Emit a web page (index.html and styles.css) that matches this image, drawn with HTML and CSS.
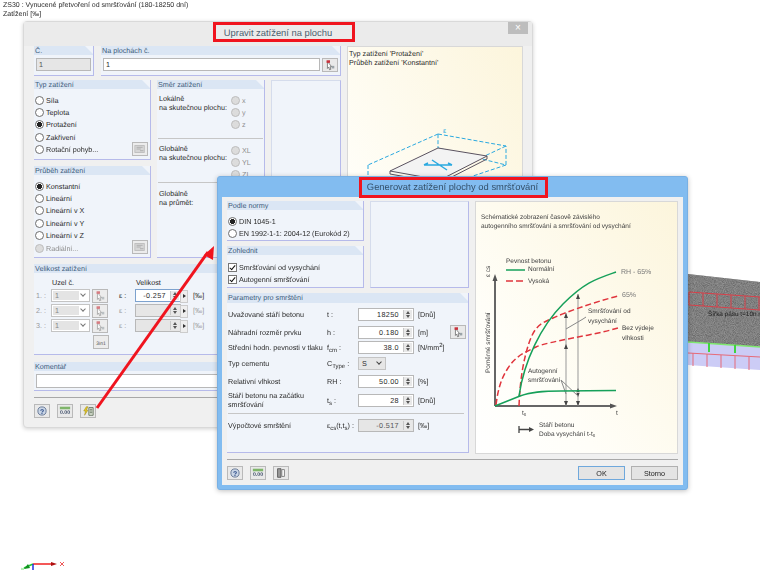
FILE: index.html

```html
<!DOCTYPE html>
<html lang="cs">
<head>
  <meta charset="UTF-8" />
  <title>Generovat zatížení plochy od smršťování</title>
  <link rel="stylesheet" href="styles.css">
</head>
<body>

<svg class="defs" width="0" height="0">
  <symbol id="pick" viewBox="0 0 16 14">
    <path d="M5 3l5 6-2 0 1 3-1.500 .5-1-3-1.500 1.500z" fill="#fff" stroke="#555" stroke-width=".8"/>
    <rect x="4" y="1.500" width="4" height="3" fill="#c8323c"/>
    <rect x="10" y="8" width="3" height="3" fill="#9aa3a8"/>
  </symbol>
  <symbol id="card" viewBox="0 0 16 14">
    <rect x="2" y="3" width="11" height="8" fill="#c9c9c9" stroke="#9a9a9a"/>
    <path d="M4 5h7M4 7h5M8 9h4" stroke="#7c7c7c"/>
  </symbol>
</svg>

<div class="stage">

  <header class="doc-head">
    <div>ZS30 : Vynucené přetvoření od smršťování (180-18250 dní)</div>
    <div>Zatížení [‰]</div>
  </header>

  <!-- 3D model behind the dialogs -->
  <svg class="model" viewBox="688 270 72 104">
    <defs>
      <filter id="grain" x="0" y="0" width="100%" height="100%">
        <feTurbulence type="fractalNoise" baseFrequency="1.100" numOctaves="2" seed="4"/>
        <feColorMatrix values="0 0 0 0 .3  0 0 0 0 .3  0 0 0 0 .3  .9 .9 .9 0 -.9"/>
        <feComposite in2="SourceGraphic" operator="in"/>
        <feMerge><feMergeNode in="SourceGraphic"/><feMergeNode/></feMerge>
      </filter>
    </defs>
    <path d="M688 274L760 282V347L688 342z" fill="#6c6c6c" filter="url(#grain)"/>
    <path d="M688 342L760 347V370L688 365z" fill="#ccccf6"/>
    <path d="M688 342L760 347" stroke="#7fe86f" stroke-width="1.500"/>
    <path d="M689 292L760 297M689 305L760 310M689 292V305M703 293V306M717 294V307M731 295V308M745 296V309M759 297V310" stroke="#d8404a" fill="none"/>
    <path d="M688 353L760 357M693 353V366M707 354V367M721 355V368M735 356V369M749 357V370" stroke="#e66a78" fill="none"/>
    <path d="M709 343V352M735 345V353" stroke="#3fd43f" stroke-width="2"/>
    <text x="708" y="316" font-size="6.400" fill="#1c1c1c" font-family="Liberation Sans">Šířka pásu t=10n n</text>
  </svg>

  <section class="win win-back">
    <div class="win-title">Upravit zatížení na plochu</div>
    <button class="win-close">×</button>
    <div class="win-body">
      <div class="back-main">
        <div class="back-left">
          <div class="back-row1">
            <div class="group">
              <h4>Č.</h4>
              <div class="pad-field"><div class="field field-off">1</div></div>
            </div>
            <div class="group">
              <h4>Na plochách č.</h4>
              <div class="pad-field pad-pick">
                <div class="field field-grow">1</div>
                <span class="tool"><svg><use href="#pick"/></svg></span>
              </div>
            </div>
          </div>

          <div class="back-row2">
            <div class="col-stack">
              <div class="group group-typ">
                <h4>Typ zatížení</h4>
                <div class="radios">
                  <label class="opt"><input type="radio" name="typ"> Síla</label>
                  <label class="opt"><input type="radio" name="typ"> Teplota</label>
                  <label class="opt"><input type="radio" name="typ" checked> Protažení</label>
                  <label class="opt"><input type="radio" name="typ"> Zakřivení</label>
                  <label class="opt opt-tool"><input type="radio" name="typ"> Rotační pohyb...<span class="tool tool-dim"><svg><use href="#card"/></svg></span></label>
                </div>
              </div>
              <div class="group group-prubeh">
                <h4>Průběh zatížení</h4>
                <div class="radios">
                  <label class="opt"><input type="radio" name="pr" checked> Konstantní</label>
                  <label class="opt"><input type="radio" name="pr"> Lineární</label>
                  <label class="opt"><input type="radio" name="pr"> Lineární v X</label>
                  <label class="opt"><input type="radio" name="pr"> Lineární v Y</label>
                  <label class="opt"><input type="radio" name="pr"> Lineární v Z</label>
                  <label class="opt opt-tool opt-off"><input type="radio" name="pr" disabled> Radiální...<span class="tool tool-dim"><svg><use href="#card"/></svg></span></label>
                </div>
              </div>
            </div>

            <div class="group group-smer">
              <h4>Směr zatížení</h4>
              <div class="dir-block">
                <div>Lokálně<br>na skutečnou plochu:</div>
                <div class="dir-opts">
                  <label class="opt opt-off"><input type="radio" disabled> x</label>
                  <label class="opt opt-off"><input type="radio" disabled> y</label>
                  <label class="opt opt-off"><input type="radio" disabled> z</label>
                </div>
              </div>
              <div class="dir-block">
                <div>Globálně<br>na skutečnou plochu:</div>
                <div class="dir-opts">
                  <label class="opt opt-off"><input type="radio" disabled> XL</label>
                  <label class="opt opt-off"><input type="radio" disabled> YL</label>
                  <label class="opt opt-off"><input type="radio" disabled> ZL</label>
                </div>
              </div>
              <div class="dir-block dir-last">
                <div>Globálně<br>na průmět:</div>
              </div>
            </div>

            <div class="group group-empty"></div>
          </div>

          <div class="group group-vel">
            <h4>Velikost zatížení</h4>
            <div class="vel-head"><span>Uzel č.</span><span>Velikost</span></div>
            <div class="vel-row">
              <span class="vel-no">1. :</span>
              <span class="combo"><span>1</span></span>
              <span class="tool tool-dim"><svg><use href="#pick"/></svg></span>
              <span class="vel-sym">ε :</span>
              <div class="field field-num field-focus">-0.257<span class="spin"></span><span class="spin-arrow"></span></div>
              <span class="unit">[‰]</span>
            </div>
            <div class="vel-row">
              <span class="vel-no">2. :</span>
              <span class="combo"><span>1</span></span>
              <span class="tool tool-dim"><svg><use href="#pick"/></svg></span>
              <span class="vel-sym vel-dim">ε :</span>
              <div class="field field-num field-off">&nbsp;<span class="spin"></span><span class="spin-arrow"></span></div>
              <span class="unit vel-dim">[‰]</span>
            </div>
            <div class="vel-row">
              <span class="vel-no">3. :</span>
              <span class="combo"><span>1</span></span>
              <span class="tool tool-dim"><svg><use href="#pick"/></svg></span>
              <span class="vel-sym vel-dim">ε :</span>
              <div class="field field-num field-off">&nbsp;<span class="spin"></span><span class="spin-arrow"></span></div>
              <span class="unit vel-dim">[‰]</span>
            </div>
            <div class="vel-3in1"><span class="tool tool-dim tool-text">3in1</span></div>
          </div>

          <div class="group group-kom">
            <h4>Komentář</h4>
            <div class="pad-field"><div class="field field-kom">&nbsp;</div></div>
          </div>
        </div>

        <div class="preview preview-back">
          <div>Typ zatížení 'Protažení'<br>Průběh zatížení 'Konstantní'</div>
          <svg class="preview-art" viewBox="348 47 175 130">
            <text x="443" y="133" font-size="7" fill="#2aa9e0" font-family="Liberation Sans">ε</text>
            <path d="M438 134L506 146V165L438 148zM438 134L368 165M368 165L368 185M506 165L470 177M506 146L440 177" fill="none" stroke="#2aa9e0" stroke-dasharray="4 2"/>
            <path d="M390 171L438 148L487 156L440 180z" fill="#f3f3f3" stroke="#5a5260"/>
            <path d="M390 171V174L440 183L487 159V156" fill="none" stroke="#5a5260"/>
            <path d="M424 165H452M432 160L447 170M424 165l4-2M452 165l-4-2" stroke="#2aa9e0" fill="none" stroke-width="1.500"/>
          </svg>
        </div>
      </div>

      <div class="win-foot back-foot">
        <span class="tool">
          <svg viewBox="0 0 16 14"><circle cx="8" cy="7" r="4.800" fill="#c9d5e6" stroke="#5c6f8f"/><text x="8" y="10" text-anchor="middle" font-size="8" font-weight="700" fill="#2a4a86" font-family="Liberation Sans">?</text></svg>
        </span>
        <span class="tool">
          <svg viewBox="0 0 16 14"><rect x="2" y="2" width="12" height="3" fill="#7fb56a"/><text x="8" y="11" text-anchor="middle" font-size="6" font-weight="700" fill="#3a4a66" font-family="Liberation Sans">0.00</text></svg>
        </span>
        <span class="tool"><svg viewBox="0 0 16 14"><path d="M6 2L3 7h2L4 12l4-6H6l2-4z" fill="#e8c820" stroke="#8a7a10" stroke-width=".5"/><path d="M9 3h5v9H9z" fill="#dfe7d8" stroke="#5f6f5a"/><path d="M10 5h3M10 7h3M10 9h3" stroke="#5f6f5a"/></svg></span>
      </div>
    </div>
    <div class="title-mark mark-back"></div>
  </section>

  <section class="win win-front">
    <div class="win-title">Generovat zatížení plochy od smršťování</div>
    <div class="win-body">
      <div class="front-main">
        <div class="front-left">
          <div class="front-top">
            <div class="col-stack">
              <div class="group group-norma">
                <h4>Podle normy</h4>
                <div class="radios radios-tight">
                  <label class="opt"><input type="radio" name="nor" checked> DIN 1045-1</label>
                  <label class="opt"><input type="radio" name="nor"> EN 1992-1-1: 2004-12 (Eurokód 2)</label>
                </div>
              </div>
              <div class="group group-zohl">
                <h4>Zohlednit</h4>
                <div class="radios radios-checks">
                  <label class="opt"><input type="checkbox" checked> Smršťování od vysychání</label>
                  <label class="opt"><input type="checkbox" checked> Autogenní smršťování</label>
                </div>
              </div>
            </div>
            <div class="group group-empty"></div>
          </div>

          <div class="group group-par">
            <h4>Parametry pro smrštění</h4>
            <div class="par-grid">
              <div class="par-row"><span>Uvažované stáří betonu</span><span>t :</span>
                <div class="field field-num">18250<span class="spin"></span></div><span class="unit">[Dnů]</span></div>
              <div class="par-row"><span>Náhradní rozměr prvku</span><span>h :</span>
                <div class="field field-num">0.180<span class="spin"></span></div><span class="unit">[m]</span>
                <span class="tool par-pick"><svg><use href="#pick"/></svg></span></div>
              <div class="par-row"><span>Střední hodn. pevnosti v tlaku</span><span>f<sub>cm</sub> :</span>
                <div class="field field-num">38.0<span class="spin"></span></div><span class="unit">[N/mm<sup>2</sup>]</span></div>
              <div class="par-row"><span>Typ cementu</span><span>C<sub>Type</sub> :</span>
                <div class="select">S</div></div>
              <div class="par-row"><span>Relativní vlhkost</span><span>RH :</span>
                <div class="field field-num">50.00<span class="spin"></span></div><span class="unit">[%]</span></div>
              <div class="par-row"><span>Stáří betonu na začátku<br>smršťování</span><span>t<sub>s</sub> :</span>
                <div class="field field-num">28<span class="spin"></span></div><span class="unit">[Dnů]</span></div>
              <div class="par-sep"></div>
              <div class="par-row"><span>Výpočtové smrštění</span><span>ε<sub>cs</sub>(t,t<sub>s</sub>) :</span>
                <div class="field field-num field-off">-0.517<span class="spin"></span></div><span class="unit">[‰]</span></div>
            </div>
          </div>
        </div>

        <div class="preview preview-front">
          <svg class="chart" viewBox="475 201 203 253">
            <g font-family="Liberation Sans" font-size="6.500" fill="#3c3c3c">
              <text x="480" y="218">Schématické zobrazení časově závislého</text>
              <text x="480" y="227">autogenního smršťování a smršťování od vysychání</text>
              <text x="505" y="262">Pevnost betonu</text>
              <text x="527" y="270">Normální</text>
              <text x="527" y="282">Vysoká</text>
              <text x="620" y="273" font-size="7" fill="#777">RH - 65%</text>
              <text x="621" y="296" font-size="7" fill="#777">65%</text>
              <text x="587" y="312">Smršťování od</text>
              <text x="587" y="322">vysychání</text>
              <text x="621" y="329">Bez výdeje</text>
              <text x="621" y="339">vlhkosti</text>
              <text x="527" y="372">Autogenní</text>
              <text x="527" y="381">smršťování</text>
              <text x="521" y="414">t<tspan font-size="5" dy="1">s</tspan></text>
              <text x="615" y="414">t</text>
              <text x="538" y="426">Stáří betonu</text>
              <text x="538" y="435">Doba vysychání t-t<tspan font-size="5" dy="1">s</tspan></text>
              <text transform="translate(489 276) rotate(-90)">ε cs</text>
              <text transform="translate(489 372) rotate(-90)">Poměrné smršťování</text>
            </g>
            <path d="M505 269H524" stroke="#16a05a" stroke-width="1.500"/>
            <path d="M505 280H523" stroke="#e0343c" stroke-width="1.500" stroke-dasharray="7 3"/>
            <path d="M494 405V279M494 405H612" stroke="#666" stroke-width="2" fill="none"/>
            <path d="M494 273l-2.500 7h5zM616 405l-7-2.500v5z" fill="#555"/>
            <path d="M565 312V405M577 293V405" stroke="#999" fill="none"/>
            <path d="M565 312l-2 5h4zM565 405l-2-5h4zM577 293l-2 5h4zM577 405l-2-5h4zM565 343l-2 5h4zM577 387l-2 5h4zM577 396l-2-5h4z" fill="#444"/>
            <path d="M565 328L582 318M582 318L585 316M560 379L565 393M560 379L577 395" stroke="#888" fill="none"/>
            <path d="M518 405C519 380 522 360 528 342S541 322 552 317S590 302 617 295" stroke="#e0343c" stroke-width="1.500" fill="none" stroke-dasharray="6 3"/>
            <path d="M495 404C497 388 500 378 507 367S522 352 535 346S590 335 617 327" stroke="#e0343c" stroke-width="1.500" fill="none" stroke-dasharray="6 3"/>
            <path d="M518 395C523 360 540 325 562 303S595 278 615 271" stroke="#16a05a" stroke-width="1.500" fill="none"/>
            <path d="M494 405L519 395C530 391 540 390 560 390L615 389.500" stroke="#16a05a" stroke-width="1.500" fill="none"/>
            <path d="M518 425V432M518 428.500H530" stroke="#444" stroke-width="1.300" fill="none"/>
            <path d="M533 428.500l-5-2.500v5z" fill="#444"/>
          </svg>
        </div>
      </div>

      <div class="win-foot front-foot">
        <div class="foot-tools">
          <span class="tool">
            <svg viewBox="0 0 16 14"><circle cx="8" cy="7" r="4.800" fill="#c9d5e6" stroke="#5c6f8f"/><text x="8" y="10" text-anchor="middle" font-size="8" font-weight="700" fill="#2a4a86" font-family="Liberation Sans">?</text></svg>
          </span>
          <span class="tool">
            <svg viewBox="0 0 16 14"><rect x="2" y="2" width="12" height="3" fill="#7fb56a"/><text x="8" y="11" text-anchor="middle" font-size="6" font-weight="700" fill="#3a4a66" font-family="Liberation Sans">0.00</text></svg>
          </span>
          <span class="tool"><svg viewBox="0 0 16 14"><path d="M4 2h4v10H4z" fill="#9a9a9a" stroke="#555"/><path d="M9 3h3v8H9z" fill="#fff" stroke="#777"/></svg></span>
        </div>
        <div class="foot-btns">
          <button class="btn btn-main">OK</button>
          <button class="btn">Storno</button>
        </div>
      </div>
    </div>
    <div class="title-mark mark-front"></div>
  </section>

  <svg class="arrow" viewBox="0 0 760 570">
    <path d="M97 408L208 252" stroke="#f0141e" stroke-width="3"/>
    <path d="M204 255L214 246L213 260z" fill="#f0141e"/>
  </svg>

  <svg class="axes" viewBox="0 0 70 10">
    <path d="M33 4H52" stroke="#f02020" stroke-width="1.500"/>
    <path d="M51 2l6 2-6 2z" fill="#b01010"/>
    <path d="M33 4L24 8" stroke="#22cc33" stroke-width="1.500"/>
    <path d="M28 4l-4 5 6-1z" fill="#109020"/>
    <path d="M33 4V10" stroke="#2030e0" stroke-width="1.500"/>
    <path d="M60 2l4 4M64 2l-4 4" stroke="#ee5a5a"/>
    <path d="M21 8l3 2M24 8l-3 2" stroke="#8ee88e" stroke-width=".8"/>
  </svg>
</div>

</body>
</html>
```

FILE: styles.css

```css
html, body {
  margin: 0;
  padding: 0;
  background: #fff;
}

body {
  font-family: "Liberation Sans", Arial, sans-serif;
  font-size: 7.200px;
  line-height: 9px;
  color: #2b2b2b;
  text-rendering: geometricPrecision;
}

.defs {
  position: absolute;
}

/* the reference is a scaled-down screenshot, so everything sits a little soft */
.stage {
  position: relative;
  width: 760px;
  height: 570px;
  overflow: hidden;
  filter: blur(.3px);
}

.doc-head {
  padding: 1px 3px;
  font-size: 7px;
}

/* windows lie on a free canvas */
.win {
  position: absolute;
  box-sizing: border-box;
  background: #f0f0f0;
}

.win-back {
  left: 23px;
  top: 21px;
  width: 510px;
  height: 407px;
  border: 1px solid #d9d9d9;
  border-radius: 4px;
  box-shadow: 0 1px 4px rgba(0, 0, 0, .18);
}

.win-front {
  left: 217px;
  top: 176px;
  width: 471px;
  height: 314px;
  background: #82bcf0;
  border: 1px solid #78b0e4;
  border-radius: 3px;
  box-shadow: 0 1px 5px rgba(0, 0, 0, .25);
  display: flex;
  flex-direction: column;
  padding: 0 4px 4px;
}

.win-title {
  text-align: center;
  font-size: 9.400px;
  line-height: 20px;
  color: #4c5f70;
}

.win-back .win-title {
  height: 24px;
  line-height: 22px;
  background: #ebebeb;
}

.win-front .win-title {
  height: 20px;
  color: #34506a;
}

.win-close {
  position: absolute;
  right: 4px;
  top: 0;
  width: 20px;
  height: 12px;
  padding: 0;
  border: 0;
  background: #bdbdbd;
  color: #fff;
  font-size: 10px;
  line-height: 12px;
}

.title-mark {
  position: absolute;
  box-sizing: border-box;
  border: 3px solid #f0141e;
}

.mark-back {
  left: 189px;
  top: 0;
  width: 142px;
  height: 20px;
}

.mark-front {
  left: 141px;
  top: 0;
  width: 189px;
  height: 21px;
}

.win-front .win-body {
  flex: 1;
  background: #f0f0f0;
  padding: 4px 5px 0;
}

.win-back .win-body {
  padding: 0 9px 0 10px;
}

.back-main {
  display: flex;
  gap: 6px;
  height: 345px;
}

.back-left {
  width: 307px;
  display: flex;
  flex-direction: column;
}

.back-row1 {
  display: grid;
  grid-template-columns: 60px 240px;
  gap: 7px;
  height: 28px;
  margin-bottom: 6px;
}

.back-row2 {
  display: grid;
  grid-template-columns: 117px 108px 70px;
  gap: 6px;
  height: 178px;
  margin-bottom: 6px;
}

.col-stack {
  display: flex;
  flex-direction: column;
  gap: 6px;
}

/* group panel with the cut corner heading */
.group {
  box-sizing: border-box;
  background: #f0f4fa;
  border-right: 1px solid #b6baea;
  border-bottom: 1px solid #b6baea;
}

.group h4 {
  margin: 0;
  padding-left: 1px;
  height: 9px;
  font-weight: 400;
  font-size: 7.200px;
  line-height: 9px;
  color: #3d5c7c;
  background: #dbe6f4;
  clip-path: polygon(0 0, calc(100% - 8px) 0, 100% 8px, 100% 100%, 0 100%);
}

.group-typ { height: 80px; }
.group-prubeh { height: 92px; }
.group-vel { height: 91px; margin-bottom: 7px; }
.group-kom { height: 29px; }

.group-empty {
  border: 1px solid #d5dcec;
  border-right-color: #b6baea;
  border-bottom-color: #b6baea;
}

.pad-field {
  padding: 3px 2px;
}

.pad-pick {
  display: flex;
  gap: 2px;
  padding-right: 2px;
}

.field {
  position: relative;
  box-sizing: border-box;
  height: 13px;
  line-height: 11px;
  padding: 0 2px;
  background: #fff;
  border: 1px solid #b8b8b8;
}

.field-grow { flex: 1; }
.field-off { background: #e6e6e6; color: #555; }
.field-focus { border-color: #7da2ce; }
.field-kom { height: 14px; margin: 0 -2px 0 0; }

.field-num {
  width: 56px;
  text-align: right;
  padding-right: 14px;
  letter-spacing: .4px;
}

.spin {
  position: absolute;
  right: 1px;
  top: 1px;
  bottom: 1px;
  width: 8px;
  background: #e8e8e8;
  border-left: 1px solid #c8c8c8;
}

.spin::before,
.spin::after {
  content: "";
  position: absolute;
  left: 2px;
  border-left: 2px solid transparent;
  border-right: 2px solid transparent;
}

.spin::before { top: 1px; border-bottom: 3px solid #555; }
.spin::after { bottom: 1px; border-top: 3px solid #555; }

.spin-arrow {
  position: absolute;
  right: -8px;
  top: 0;
  width: 6px;
  height: 11px;
  background: #eee;
  border: 1px solid #ccc;
}

.spin-arrow::after {
  content: "";
  position: absolute;
  left: 2px;
  top: 3px;
  border-left: 3px solid #333;
  border-top: 2px solid transparent;
  border-bottom: 2px solid transparent;
}

.tool {
  display: inline-block;
  flex: none;
  box-sizing: border-box;
  width: 16px;
  height: 14px;
  background: #e9e9e9;
  border: 1px solid #b9b9b9;
}

.tool svg {
  display: block;
  width: 14px;
  height: 12px;
}

.tool-dim { background: #ececec; }
.tool-dim svg { opacity: .6; }
.tool-text { font-size: 5px; line-height: 17px; text-align: center; color: #555; }

/* radios and checkboxes */
.radios {
  padding: 5px 0 0 1px;
}

.radios-tight { padding-top: 5px; }
.radios-tight .opt { height: 12px; }
.radios-checks { padding-top: 6px; }

.opt {
  display: flex;
  align-items: center;
  gap: 2px;
  height: 12.400px;
  white-space: nowrap;
}

.opt input {
  appearance: none;
  flex: none;
  box-sizing: border-box;
  width: 9px;
  height: 9px;
  margin: 0;
  background: #fff;
  border: 1px solid #6e6e6e;
  border-radius: 50%;
}

.opt input:checked {
  background: radial-gradient(circle, #222 0 2.300px, #fff 2.800px);
}

.opt input:disabled {
  background: #dcdcdc;
  border-color: #bdbdbd;
}

.opt input[type=checkbox] {
  border-radius: 0;
  border-color: #777;
  position: relative;
}

.opt input[type=checkbox]:checked {
  background: #fff;
}

.opt input[type=checkbox]:checked::after {
  content: "";
  position: absolute;
  left: 2px;
  top: 0;
  width: 2px;
  height: 5px;
  border: solid #111;
  border-width: 0 1.400px 1.400px 0;
  transform: rotate(40deg);
}

.opt-off { color: #8e8e8e; }

.opt-tool {
  position: relative;
}

.opt-tool .tool {
  position: absolute;
  right: 2px;
  top: -2px;
}

/* load direction */
.dir-block {
  display: flex;
  justify-content: space-between;
  margin: 0 1px;
  padding: 5px 0 0 1px;
  height: 44px;
  border-bottom: 1px solid #c6c6c6;
  white-space: nowrap;
}

.dir-block + .dir-block {
  height: 38px;
}

.dir-last {
  padding-top: 6px;
  border-bottom: 0;
}

.dir-opts {
  width: 32px;
}

/* load size */
.vel-head {
  display: flex;
  padding: 5px 0 3px 18px;
  gap: 62px;
  height: 7px;
}

.vel-row {
  display: flex;
  align-items: center;
  height: 15px;
}

.vel-no {
  width: 17px;
  padding-left: 2px;
  box-sizing: border-box;
  color: #9a9a9a;
}

.combo {
  position: relative;
  box-sizing: border-box;
  width: 39px;
  height: 13px;
  margin-right: 2px;
  padding: 1px;
  background: #fff;
  border: 1px solid #c4c4c4;
  color: #888;
}

.combo span {
  display: block;
  width: 24px;
  height: 9px;
  padding-left: 2px;
  background: #e4e4e4;
}

.combo::after {
  content: "";
  position: absolute;
  right: 4px;
  top: 2px;
  width: 3px;
  height: 3px;
  border: solid #777;
  border-width: 0 1px 1px 0;
  transform: rotate(45deg);
}

.vel-sym {
  width: 27px;
  padding-left: 11px;
  box-sizing: border-box;
}

.vel-dim { color: #9a9a9a; }

.vel-row .field-num {
  width: 46px;
  margin-right: 8px;
}

.unit {
  padding-left: 4px;
  white-space: nowrap;
}

.vel-3in1 {
  padding: 2px 0 0 59px;
}

/* preview panels */
.preview {
  box-sizing: border-box;
  border: 1px solid #d8d8d8;
  background: linear-gradient(to bottom left, #fcf5dc, #fffef8 70%, #fff);
}

.preview-back {
  width: 176px;
  padding: 2px 1px;
  position: relative;
  overflow: hidden;
}

.preview-art {
  position: absolute;
  left: 0;
  top: 0;
  width: 175px;
  height: 130px;
}

.preview-front {
  width: 203px;
  height: 253px;
}

.chart {
  display: block;
  width: 203px;
  height: 253px;
}

.win-foot {
  margin-top: 6px;
  padding-top: 6px;
  border-top: 1px solid #a8a8a8;
  display: flex;
  gap: 7px;
}

.back-foot {
  margin-left: 0;
  width: 307px;
}

/* front dialog */
.front-main {
  display: grid;
  grid-template-columns: 242px 203px;
  gap: 6px;
}

.front-left {
  display: flex;
  flex-direction: column;
  gap: 5px;
}

.front-top {
  display: grid;
  grid-template-columns: 137px 99px;
  gap: 6px;
  height: 87px;
}

.front-top .col-stack { gap: 5px; }
.group-norma { height: 40px; }
.group-zohl { height: 42px; }

.group-par { height: 160px; }

.group-par h4 { height: 10px; line-height: 10px; }

.par-grid {
  display: grid;
  grid-template-rows: 17px 18px 13px 18px 18px 20px 7px 16px;
  padding: 3px 0 0 1px;
}

.par-row {
  position: relative;
  display: grid;
  grid-template-columns: 99px 31px auto auto 1fr;
  align-items: center;
}

.par-row sub {
  font-size: 6px;
  line-height: 0;
}

.par-row sup {
  font-size: 6px;
  line-height: 0;
}

.par-row .field-num {
  width: 56px;
}

.par-pick {
  position: absolute;
  left: 222px;
  top: 2px;
}

.select {
  position: relative;
  box-sizing: border-box;
  width: 28px;
  height: 13px;
  padding-left: 3px;
  line-height: 11px;
  background: #e6e6e6;
  border: 1px solid #c4c4c4;
}

.select::after {
  content: "";
  position: absolute;
  right: 4px;
  top: 2px;
  width: 3px;
  height: 3px;
  border: solid #444;
  border-width: 0 1px 1px 0;
  transform: rotate(45deg);
}

.par-sep {
  align-self: center;
  height: 1px;
  margin-right: 4px;
  background: #c6c6c6;
}

.front-foot {
  justify-content: space-between;
  margin-top: 5px;
}

.foot-tools {
  display: flex;
  gap: 7px;
}

.foot-btns {
  display: flex;
  gap: 6px;
}

.btn {
  width: 47px;
  height: 14px;
  padding: 0;
  background: #e4e4e4;
  border: 1px solid #b0b0b0;
  font: 7.200px "Liberation Sans", Arial, sans-serif;
  color: #222;
}

.btn-main {
  border-color: #6fa8dc;
}

.arrow {
  position: absolute;
  left: 0;
  top: 0;
  width: 760px;
  height: 570px;
  pointer-events: none;
}

.model {
  position: absolute;
  left: 688px;
  top: 270px;
  width: 72px;
  height: 104px;
}

.axes {
  position: absolute;
  left: 0;
  top: 560px;
  width: 70px;
  height: 10px;
}
```
